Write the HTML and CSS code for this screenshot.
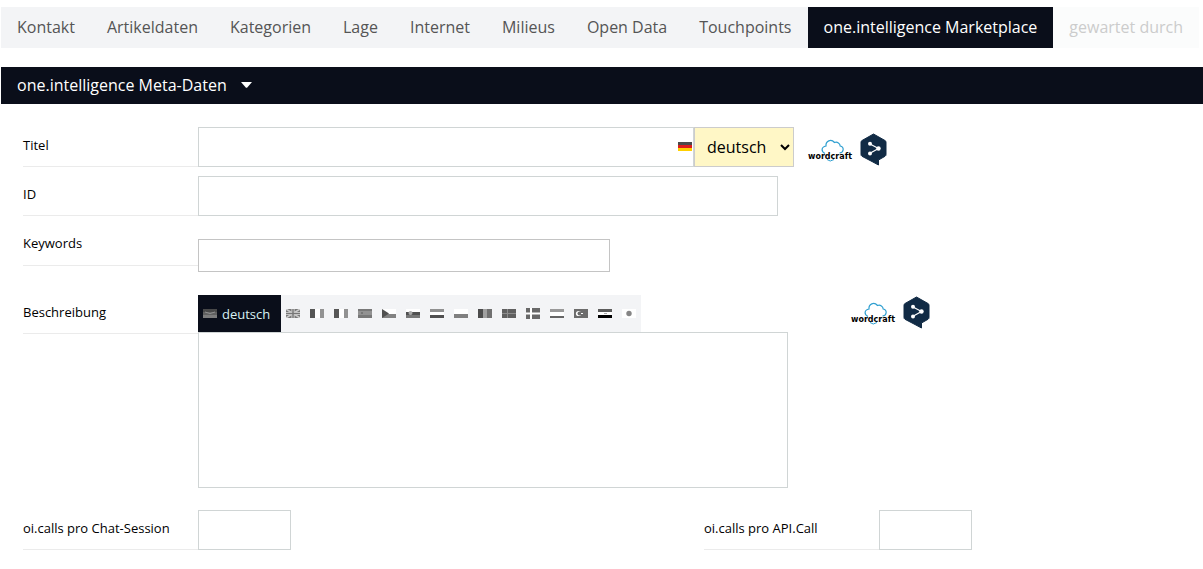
FILE: index.html
```html
<!DOCTYPE html>
<html lang="de">
<head>
<meta charset="utf-8">
<meta name="viewport" content="width=device-width, initial-scale=1">
<title>one.intelligence Marketplace</title>
<link rel="stylesheet" href="styles.css">
</head>
<body>
<nav class="tabs">
  <a href="#">Kontakt</a>
  <a href="#">Artikeldaten</a>
  <a href="#">Kategorien</a>
  <a href="#">Lage</a>
  <a href="#">Internet</a>
  <a href="#">Milieus</a>
  <a href="#">Open Data</a>
  <a href="#">Touchpoints</a>
  <a href="#" class="active" aria-current="page">one.intelligence Marketplace</a>
  <a href="#" class="disabled" aria-disabled="true">gewartet durch</a>
</nav>

<button type="button" class="section-head" aria-expanded="true">one.intelligence Meta-Daten
  <svg width="11" height="6" viewBox="0 0 11 6"><path d="M0 0H11L6.500 5.200Q5.500 6.200 4.500 5.200Z" fill="#fff"/></svg>
</button>

<form class="form">
  <div class="row">
    <label class="name" for="title">Titel</label>
    <div class="title-box">
      <input id="title" class="box" type="text">
      <svg class="flag title-flag" viewBox="0 0 14 9"><rect width="14" height="3" fill="#4a4a4a"/><rect y="3" width="14" height="3" fill="#dc1c1c"/><rect y="6" width="14" height="3" fill="#ffcf00"/></svg>
    </div>
    <select class="language" aria-label="Sprache"><option>deutsch</option></select>
    <div class="tools">
      <button type="button" aria-label="wordcraft"><svg width="46" height="24" viewBox="0 0 46 24">
        <path d="M18 15.500C14 13.500 14 9 19 8C18.500 3 24 .5 27.500 4.500C30.500 3.500 33 5.500 33.200 8C37.500 9 37 14.500 32.500 15" fill="none" stroke="#2f9fd0" stroke-width="1.200"/>
        <path d="M20 21.500Q23 24.500 27 21.500" fill="none" stroke="#2f9fd0"/>
        <text x="1" y="21" class="wordmark">wordcraft</text>
      </svg></button>
      <button type="button" aria-label="Übersetzen"><svg width="27" height="33" viewBox="0 0 27 33">
        <path d="M13.500 1 25 7.500Q26 8 26 9.200V21.500Q26 22.700 25 23.300L18.500 27V32L11 28 2 23.300Q1 22.700 1 21.500V9.200Q1 8 2 7.500Z" fill="#112b45" stroke="#112b45"/>
        <path d="M9.500 10.700 18.500 15.500 9.500 20.500" fill="none" stroke="#fff" stroke-width="1.200"/>
        <circle cx="10" cy="10.700" r="2" fill="#fff"/><circle cx="18.500" cy="15.500" r="2.200" fill="#fff"/><circle cx="10" cy="20.500" r="2" fill="#fff"/>
      </svg></button>
    </div>
  </div>

  <div class="row">
    <label class="name" for="ident">ID</label>
    <input id="ident" class="box ident" type="text">
  </div>

  <div class="row keywords-row">
    <label class="name" for="keywords">Keywords</label>
    <input id="keywords" class="box keywords" type="text">
  </div>

  <div class="row description-row">
    <label class="name" for="description">Beschreibung</label>
    <div class="editor">
      <div class="flags">
        <button type="button" class="current"><svg class="flag" viewBox="0 0 14 9"><path fill="#484848" d="M0 0h14v3H0z"/><path fill="#606060" d="M0 3h14v3H0z"/><path fill="#7c7c7c" d="M0 6h14v3H0z"/><path d="M2 3Q7 6 12 3" stroke="#919191" fill="none"/></svg>deutsch</button>
        <button type="button" aria-label="englisch"><svg class="flag" viewBox="0 0 14 9"><path fill="#777" d="M0 0h14v9H0z"/><path d="M0 0 14 9M14 0 0 9" stroke="#ccc" stroke-width="1.500"/><path d="M7 0V9M0 4.500H14" stroke="#ddd" stroke-width="3"/><path d="M7 0V9M0 4.500H14" stroke="#777" stroke-width="1.500"/></svg></button>
        <button type="button" aria-label="französisch"><svg class="flag" viewBox="0 0 14 9"><path fill="#fff" d="M0 0h14v9H0z"/><path fill="#565656" d="M0 0h5v9H0z"/><path fill="#929292" d="M10 0h4v9h-4z"/></svg></button>
        <button type="button" aria-label="italienisch"><svg class="flag" viewBox="0 0 14 9"><path fill="#fff" d="M0 0h14v9H0z"/><path fill="#565656" d="M0 0h5v9H0z"/><path fill="#929292" d="M10 0h4v9h-4z"/></svg></button>
        <button type="button" aria-label="spanisch"><svg class="flag" viewBox="0 0 14 9"><path fill="#787878" d="M0 0h14v9H0z"/><path fill="#929292" d="M0 2h14v4H0z"/><path fill="#777" d="M3 3h2v2H3z"/></svg></button>
        <button type="button" aria-label="tschechisch"><svg class="flag" viewBox="0 0 14 9"><path fill="#fff" d="M0 0h14v5H0z"/><path fill="#828282" d="M0 5h14v4H0z"/><path fill="#505050" d="M0 0 7 4.500 0 9z"/></svg></button>
        <button type="button" aria-label="slowenisch"><svg class="flag" viewBox="0 0 14 9"><path fill="#fff" d="M0 0h14v3H0z"/><path fill="#505050" d="M0 3h14v3H0z"/><path fill="#777" d="M0 6h14v3H0z"/><circle cx="4.500" cy="4" r="2" fill="#aaa"/></svg></button>
        <button type="button" aria-label="niederländisch"><svg class="flag" viewBox="0 0 14 9"><path fill="#fff" d="M0 0h14v9H0z"/><path fill="#909090" d="M0 0h14v3H0z"/><path fill="#505050" d="M0 6h14v3H0z"/></svg></button>
        <button type="button" aria-label="polnisch"><svg class="flag" viewBox="0 0 14 9"><path fill="#fff" d="M0 0h14v5H0z"/><path fill="#808080" d="M0 5h14v4H0z"/></svg></button>
        <button type="button" aria-label="rumänisch"><svg class="flag" viewBox="0 0 14 9"><path fill="#4c4c4c" d="M0 0h5v9H0z"/><path fill="#a0a0a0" d="M5 0h4v9H5z"/><path fill="#707070" d="M9 0h5v9H9z"/></svg></button>
        <button type="button" aria-label="schwedisch"><svg class="flag" viewBox="0 0 14 9"><path fill="#606060" d="M0 0h14v9H0z"/><path d="M5.500 0V9M0 4.500H14" stroke="#8c8c8c"/></svg></button>
        <button type="button" aria-label="dänisch"><svg class="flag flag-tall" viewBox="0 0 14 11"><path fill="#686868" d="M0 0h14v11H0z"/><path d="M5 0V11M0 5.500H14" stroke="#fff" stroke-width="2"/></svg></button>
        <button type="button" aria-label="kroatisch"><svg class="flag" viewBox="0 0 14 9"><path fill="#fff" d="M0 0h14v9H0z"/><path fill="#999" d="M0 0h14v3H0z"/><path fill="#656565" d="M0 7h14v2H0z"/></svg></button>
        <button type="button" aria-label="türkisch"><svg class="flag" viewBox="0 0 14 9"><path fill="#6c6c6c" d="M0 0h14v9H0z"/><circle cx="4.500" cy="4.500" r="2.600" fill="#fff"/><circle cx="5.500" cy="4.500" r="2" fill="#6c6c6c"/><path fill="#fff" d="M7 4h2v1H7z"/></svg></button>
        <button type="button" aria-label="arabisch"><svg class="flag" viewBox="0 0 14 9"><path fill="#fff" d="M0 0h14v9H0z"/><path fill="#5c5c5c" d="M0 0h14v3H0z"/><path d="M0 6h14v3H0z"/><path fill="#aaa" d="M6 4h3v1H6z"/></svg></button>
        <button type="button" aria-label="japanisch"><svg class="flag" viewBox="0 0 14 9"><path fill="#fff" d="M0 0h14v9H0z"/><circle cx="7" cy="4.500" r="2.700" fill="#858585"/></svg></button>
      </div>
      <textarea id="description" class="box"></textarea>
    </div>
    <div class="tools">
      <button type="button" aria-label="wordcraft"><svg width="46" height="24" viewBox="0 0 46 24">
        <path d="M18 15.500C14 13.500 14 9 19 8C18.500 3 24 .5 27.500 4.500C30.500 3.500 33 5.500 33.200 8C37.500 9 37 14.500 32.500 15" fill="none" stroke="#2f9fd0" stroke-width="1.200"/>
        <path d="M20 21.500Q23 24.500 27 21.500" fill="none" stroke="#2f9fd0"/>
        <text x="1" y="21" class="wordmark">wordcraft</text>
      </svg></button>
      <button type="button" aria-label="Übersetzen"><svg width="27" height="33" viewBox="0 0 27 33">
        <path d="M13.500 1 25 7.500Q26 8 26 9.200V21.500Q26 22.700 25 23.300L18.500 27V32L11 28 2 23.300Q1 22.700 1 21.500V9.200Q1 8 2 7.500Z" fill="#112b45" stroke="#112b45"/>
        <path d="M9.500 10.700 18.500 15.500 9.500 20.500" fill="none" stroke="#fff" stroke-width="1.200"/>
        <circle cx="10" cy="10.700" r="2" fill="#fff"/><circle cx="18.500" cy="15.500" r="2.200" fill="#fff"/><circle cx="10" cy="20.500" r="2" fill="#fff"/>
      </svg></button>
    </div>
  </div>

  <div class="calls-row">
    <div class="row">
      <label class="name" for="chat-calls">oi.calls pro Chat-Session</label>
      <input id="chat-calls" class="box number" type="text">
    </div>
    <div class="row">
      <label class="name" for="api-calls">oi.calls pro API.Call</label>
      <input id="api-calls" class="box number" type="text">
    </div>
  </div>
</form>
</body>
</html>
```

FILE: styles.css
```css
* { box-sizing: border-box; }
body {
  margin: 0;
  padding: 7px 0 0 1px;
  background: #fff;
  color: #000;
  font: 16px/24px "Open Sans", "Noto Sans", sans-serif;
}
button, input, textarea, select { font: inherit; margin: 0; border-radius: 0; }
button { border: 0; padding: 0; background: none; }
svg { display: block; flex: none; }
.wordmark { font: bold 8px "DejaVu Sans", sans-serif; fill: #000; }

.tabs { display: flex; white-space: nowrap; }
.tabs a {
  padding: 8px 16px 9px;
  background: #f3f4f6;
  color: #555;
  text-decoration: none;
}
.tabs .active { background: #0a0e1a; color: #fff; }
.tabs .disabled { background: #fbfcfc; color: #ccc; }

.section-head {
  display: flex;
  align-items: center;
  gap: 14px;
  width: 100%;
  margin-top: 19px;
  padding: 6px 16px 7px;
  background: #0a0e1a;
  color: #fff;
}

.form { display: flex; flex-direction: column; gap: 9px; padding: 23px 22px 19px; }
.row { display: flex; align-items: flex-start; }
.name {
  flex: none;
  width: 175px;
  height: 40px;
  padding-top: 8px;
  border-bottom: 1px solid #ebebeb;
  font-size: 13px;
  line-height: 20px;
}
.box {
  display: block;
  height: 40px;
  padding: 4px 12px;
  border: 1px solid #d0d5d5;
  background: #fff;
  outline: 0;
}
.title-box { position: relative; flex: 0 1 496px; }
.title-box .box { width: 100%; }
.flag { width: 14px; height: 9px; }
.flag-tall { height: 11px; }
.title-flag { position: absolute; right: 2px; top: 15px; }
.language {
  width: 100px;
  height: 40px;
  padding: 0 0 0 8px;
  border: 1px solid #ccc;
  background: #fff7c6;
  color: #000;
}
.tools { display: flex; align-items: center; gap: 7px; margin: 6px 0 0 13px; }
.ident { flex: 0 1 580px; }
.keywords-row .name { height: 41px; }
.keywords { flex: 0 1 412px; height: 33px; margin-top: 14px; border-color: #c4c4c4; }

.description-row { margin-top: 13px; }
.editor { flex: 0 1 590px; padding-top: 1px; }
.flags { display: flex; width: max-content; background: #f3f4f6; }
.flags button {
  display: flex;
  align-items: center;
  gap: 5px;
  height: 37px;
  padding: 0 5px;
  font-size: 13px;
}
.flags .current { padding-right: 11px; background: #0a0e1a; color: #d8f1f3; }
.editor textarea { width: 100%; height: 156px; resize: none; }
.description-row .tools { margin: 2px 0 0 62px; }

.calls-row {
  display: grid;
  grid-template-columns: minmax(268px, 681px) minmax(268px, 1fr);
  margin-top: 13px;
}
.number { width: 93px; }
```
